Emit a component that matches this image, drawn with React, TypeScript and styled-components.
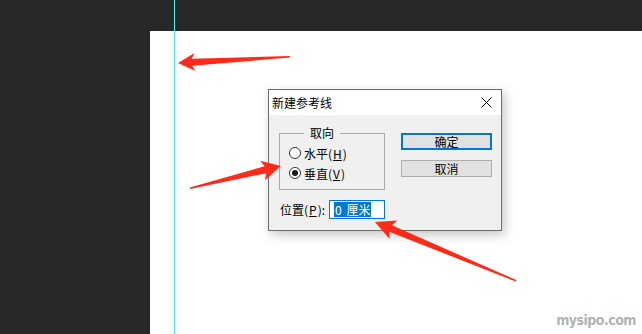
import React from "react";
import styled, { createGlobalStyle } from "styled-components";

const Global = createGlobalStyle`
  html, body { margin: 0; padding: 0; }
  body { width: 642px; height: 334px; overflow: hidden; background: #282828; }
  * { box-sizing: border-box; }
`;

const CJK = `"Noto Sans CJK SC", "Liberation Sans", sans-serif`;

const Screen = styled.div`
  position: relative;
  width: 642px;
  height: 334px;
  background: #282828;
  padding: 31px 0 0 150px;
  display: flex;
`;

const Canvas = styled.div`
  flex: 1;
  background: #ffffff;
`;

const Guide = styled.div`
  position: absolute;
  left: 174px;
  top: 0;
  width: 1px;
  height: 100%;
  background: #3ff2f5;
`;

const Dialog = styled.div`
  position: absolute;
  left: 268px;
  top: 89px;
  width: 234px;
  border: 1px solid #6e6e6e;
  background: #f0f0f0;
  box-shadow: 3px 4px 10px rgba(0, 0, 0, 0.22);
  font-family: ${CJK};
  font-size: 12px;
  color: #000;
`;

const TitleBar = styled.div`
  height: 25px;
  background: #fff;
  display: flex;
  align-items: center;
  justify-content: space-between;
  padding: 0 9px 0 3px;
`;

const Title = styled.span`
  font-size: 12px;
  line-height: 1;
`;

const Body = styled.div`
  display: grid;
  grid-template-columns: 106px 91px;
  column-gap: 16px;
  row-gap: 10px;
  padding: 11px 9px 11px 10px;
`;

const Group = styled.fieldset`
  margin: 0;
  padding: 3px 0 6px 9px;
  border: 1px solid #a8a8a8;
  display: flex;
  flex-direction: column;
  min-width: 0;
`;

const Legend = styled.legend`
  margin-left: 15px;
  padding: 0 6px;
  font-size: 12px;
  line-height: 14px;
`;

const RadioRow = styled.div`
  height: 20px;
  display: flex;
  align-items: center;
  gap: 3px;
`;

const RadioCircle = styled.span<{ $checked?: boolean }>`
  width: 12px;
  height: 12px;
  border-radius: 50%;
  border: 1px solid #333;
  background: #fff;
  display: flex;
  align-items: center;
  justify-content: center;
  &::after {
    content: "";
    width: 6px;
    height: 6px;
    border-radius: 50%;
    background: ${(p) => (p.$checked ? "#1a1a1a" : "transparent")};
  }
`;

const Key = styled.span`
  text-decoration: underline;
  padding: 0 1px;
`;

const Buttons = styled.div`
  display: flex;
  flex-direction: column;
  gap: 10px;
  padding-top: 7px;
`;

const Button = styled.div<{ $default?: boolean }>`
  height: 17px;
  display: flex;
  align-items: center;
  justify-content: center;
  background: #e1e1e1;
  border: ${(p) => (p.$default ? "2px solid #0078d7" : "1px solid #adadad")};
  font-size: 12px;
`;

const PosRow = styled.div`
  grid-column: 1 / span 2;
  display: flex;
  align-items: center;
  gap: 4px;
  padding-left: 1px;
`;

const Input = styled.div`
  width: 56px;
  height: 19px;
  border: 1px solid #0078d7;
  background: #fff;
  display: flex;
  align-items: center;
  padding-left: 4px;
`;

const Selected = styled.span`
  background: #0078d7;
  color: #fff;
  line-height: 15px;
  padding: 0 1px;
  word-spacing: 2px;
`;

const Arrows = styled.svg`
  position: absolute;
  left: 0;
  top: 0;
  pointer-events: none;
`;

const Watermark = styled.div`
  position: absolute;
  right: 6px;
  bottom: 6px;
  font-family: "Liberation Sans Narrow", "DejaVu Sans Condensed", sans-serif;
  font-weight: bold;
  font-size: 14px;
  color: #b3b3b3;
  letter-spacing: -0.5px;
`;

type ArrowProps = { tip: [number, number]; tail: [number, number]; head?: number; w?: number };

function Arrow({ tip, tail, head = 17, w = 9 }: ArrowProps) {
  const dx = tail[0] - tip[0];
  const dy = tail[1] - tip[1];
  const len = Math.hypot(dx, dy);
  const ang = (Math.atan2(dy, dx) * 180) / Math.PI;
  const pts = [
    [0, 0],
    [head, -w],
    [head - 3, -3.5],
    [len, -1],
    [len, 0.6],
    [head - 3, 3.5],
    [head, w],
  ]
    .map((p) => p.join(","))
    .join(" ");
  return (
    <polygon
      points={pts}
      fill="#ff2a1a"
      transform={`translate(${tip[0]} ${tip[1]}) rotate(${ang})`}
    />
  );
}

function CloseIcon() {
  return (
    <svg width="11" height="11" viewBox="0 0 11 11">
      <path d="M0.5 0.5 L10.5 10.5 M10.5 0.5 L0.5 10.5" stroke="#000" strokeWidth="1" />
    </svg>
  );
}

export default function App() {
  return (
    <>
      <Global />
      <Screen>
        <Canvas />
        <Guide />
        <Dialog>
          <TitleBar>
            <Title>新建参考线</Title>
            <CloseIcon />
          </TitleBar>
          <Body>
            <Group>
              <Legend>取向</Legend>
              <RadioRow>
                <RadioCircle />
                <span>
                  水平(<Key>H</Key>)
                </span>
              </RadioRow>
              <RadioRow>
                <RadioCircle $checked />
                <span>
                  垂直(<Key>V</Key>)
                </span>
              </RadioRow>
            </Group>
            <Buttons>
              <Button $default>确定</Button>
              <Button>取消</Button>
            </Buttons>
            <PosRow>
              <span>
                位置(<Key>P</Key>):
              </span>
              <Input>
                <Selected>0 厘米</Selected>
              </Input>
            </PosRow>
          </Body>
        </Dialog>
        <Arrows width="642" height="334" viewBox="0 0 642 334">
          <Arrow tip={[178, 63]} tail={[290, 57]} />
          <Arrow tip={[281, 166]} tail={[190, 188]} head={19} w={10} />
          <Arrow tip={[375, 222]} tail={[516, 281]} head={20} w={10} />
        </Arrows>
        <Watermark>mysipo.com</Watermark>
      </Screen>
    </>
  );
}
